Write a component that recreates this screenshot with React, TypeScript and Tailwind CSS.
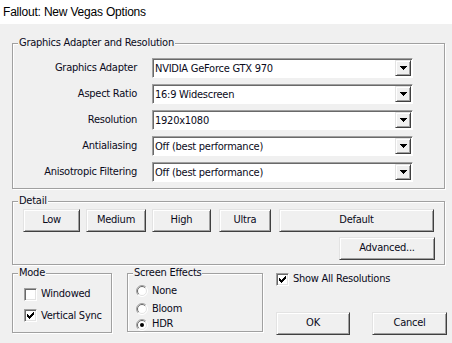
import type { ReactNode } from "react";

const GroupBox = ({ title, className, children }: { title: string; className: string; children: ReactNode }) => (
  <fieldset
    className={`border border-[#a0a0a0] p-0 shadow-[inset_1px_1px_0_#fff,1px_1px_0_#fff] ${className}`}
  >
    <legend className="ml-[5px] bg-[#f0f0f0] px-[1px] text-[11px] leading-[14px]">{title}</legend>
    {children}
  </fieldset>
);

const DownArrow = () => (
  <svg width="7" height="4" viewBox="0 0 7 4" shapeRendering="crispEdges">
    <rect x="0" y="0" width="7" height="1" fill="#000" />
    <rect x="1" y="1" width="5" height="1" fill="#000" />
    <rect x="2" y="2" width="3" height="1" fill="#000" />
    <rect x="3" y="3" width="1" height="1" fill="#000" />
  </svg>
);

const Select = ({ value }: { value: string }) => (
  <div className="ml-[15px] flex h-[20px] w-[261px] border border-t-[#a0a0a0] border-l-[#a0a0a0] border-r-white border-b-white bg-white p-[1px] shadow-[inset_1px_1px_0_#696969]">
    <span className="flex-1 pl-[1px] pt-[1px] text-[11px] leading-[16px]">{value}</span>
    <div className="flex w-[16px] items-center justify-center border border-t-[#e3e3e3] border-l-[#e3e3e3] border-r-[#404040] border-b-[#404040] bg-[#f0f0f0] shadow-[inset_1px_1px_0_#fff,inset_-1px_-1px_0_#a0a0a0]">
      <DownArrow />
    </div>
  </div>
);

const Button = ({ label, className }: { label: string; className: string }) => (
  <button
    className={`h-[23px] border border-t-[#e3e3e3] border-l-[#e3e3e3] border-r-[#404040] border-b-[#404040] bg-[#f0f0f0] text-[11px] shadow-[inset_1px_1px_0_#fff,inset_-1px_-1px_0_#a0a0a0] ${className}`}
  >
    {label}
  </button>
);

const CheckBox = ({ checked }: { checked?: boolean }) => (
  <div className="flex h-[13px] w-[13px] items-center justify-center border border-t-[#a0a0a0] border-l-[#a0a0a0] border-r-white border-b-white bg-white shadow-[inset_1px_1px_0_#696969,inset_-1px_-1px_0_#e3e3e3]">
    {checked && (
      <svg width="7" height="7" viewBox="0 0 7 7" shapeRendering="crispEdges">
        <rect x="6" y="0" width="1" height="3" fill="#000" />
        <rect x="5" y="1" width="1" height="3" fill="#000" />
        <rect x="4" y="2" width="1" height="3" fill="#000" />
        <rect x="3" y="3" width="1" height="3" fill="#000" />
        <rect x="2" y="4" width="1" height="3" fill="#000" />
        <rect x="1" y="3" width="1" height="3" fill="#000" />
        <rect x="0" y="2" width="1" height="3" fill="#000" />
      </svg>
    )}
  </div>
);

const Radio = ({ checked }: { checked?: boolean }) => (
  <svg width="12" height="12" viewBox="0 0 12 12">
    <circle cx="6" cy="6" r="5.5" fill="#fff" />
    <path d="M2.1 9.9 A5.5 5.5 0 0 1 9.9 2.1" fill="none" stroke="#a0a0a0" strokeWidth="1" />
    <path d="M2.8 9.2 A4.5 4.5 0 0 1 9.2 2.8" fill="none" stroke="#696969" strokeWidth="1" />
    <path d="M9.9 2.1 A5.5 5.5 0 0 1 2.1 9.9" fill="none" stroke="#fff" strokeWidth="1" />
    <path d="M9.2 2.8 A4.5 4.5 0 0 1 2.8 9.2" fill="none" stroke="#e3e3e3" strokeWidth="1" />
    {checked && <circle cx="6" cy="6" r="2" fill="#000" />}
  </svg>
);

const rows = [
  { label: "Graphics Adapter", value: "NVIDIA GeForce GTX 970" },
  { label: "Aspect Ratio", value: "16:9 Widescreen" },
  { label: "Resolution", value: "1920x1080" },
  { label: "Antialiasing", value: "Off (best performance)" },
  { label: "Anisotropic Filtering", value: "Off (best performance)" },
];

export default function App() {
  return (
    <div className="h-[343px] w-[452px] overflow-hidden bg-[#f0f0f0] font-['DejaVu_Sans',sans-serif] font-stretch-condensed tracking-[-0.25px] text-[#0a0a1a]">
      {/* Title bar */}
      <div className="h-[24px] bg-white pl-[3px] font-['Liberation_Sans',Arial,sans-serif] text-[12px] leading-[24px] tracking-[-0.2px] text-black">
        Fallout: New Vegas Options
      </div>

      {/* Graphics Adapter and Resolution */}
      <GroupBox title="Graphics Adapter and Resolution" className="ml-[12px] mt-[12px] h-[153px] w-[433px]">
        <div className="flex flex-col gap-[6px] pt-[8px]">
          {rows.map((row) => (
            <div key={row.label} className="flex items-center">
              <span className="w-[124px] pt-[1px] text-right text-[11px]">{row.label}</span>
              <Select value={row.value} />
            </div>
          ))}
        </div>
      </GroupBox>

      {/* Detail */}
      <GroupBox title="Detail" className="ml-[12px] mt-[5px] h-[71px] w-[433px]">
        <div className="pt-[1px]">
          <div className="flex">
            <Button label="Low" className="ml-[10px] w-[57px]" />
            <Button label="Medium" className="ml-[6px] w-[60px]" />
            <Button label="High" className="ml-[6px] w-[59px]" />
            <Button label="Ultra" className="ml-[8px] w-[52px]" />
            <Button label="Default" className="ml-[8px] w-[155px]" />
          </div>
          <div className="mt-[5px] flex justify-end pr-[9px]">
            <Button label="Advanced..." className="w-[96px]" />
          </div>
        </div>
      </GroupBox>

      {/* Bottom row */}
      <div className="mt-[1px] flex items-start">
        <GroupBox title="Mode" className="ml-[12px] h-[67px] w-[100px]">
          <div className="flex flex-col gap-[5px] pl-[11px] pt-[6px] text-[11px]">
            <label className="flex items-center gap-[4px]">
              <CheckBox />
              <span>Windowed</span>
            </label>
            <label className="flex items-center gap-[4px]">
              <CheckBox checked />
              <span>Vertical Sync</span>
            </label>
          </div>
        </GroupBox>

        <GroupBox title="Screen Effects" className="ml-[15px] h-[66px] w-[136px]">
          <div className="flex flex-col pl-[8px] pt-[3px] text-[11px]">
            <label className="flex h-[16px] items-center gap-[4px]">
              <Radio />
              <span>None</span>
            </label>
            <label className="mt-[2px] flex h-[16px] items-center gap-[4px]">
              <Radio />
              <span>Bloom</span>
            </label>
            <label className="flex h-[15px] items-center gap-[4px]">
              <Radio checked />
              <span>HDR</span>
            </label>
          </div>
        </GroupBox>

        <div className="ml-[13px] flex flex-col">
          <label className="mt-[5px] flex items-center gap-[4px] text-[11px]">
            <CheckBox checked />
            <span>Show All Resolutions</span>
          </label>
          <div className="mt-[24px] flex">
            <Button label="OK" className="w-[74px]" />
            <Button label="Cancel" className="ml-[22px] w-[75px]" />
          </div>
        </div>
      </div>
    </div>
  );
}
